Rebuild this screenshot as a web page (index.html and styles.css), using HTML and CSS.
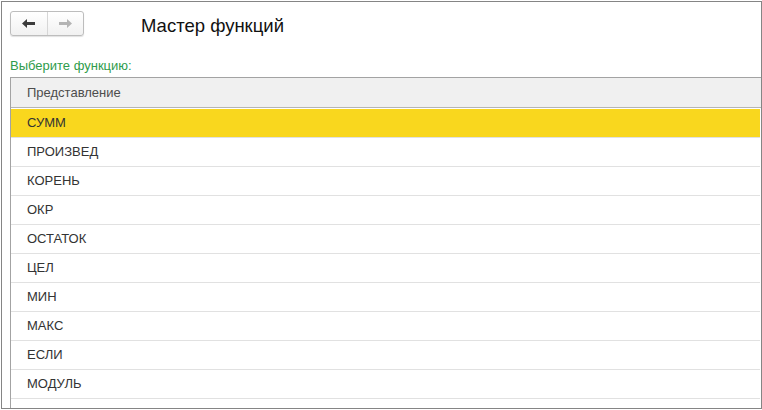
FILE: index.html
```html
<!DOCTYPE html>
<html lang="ru">
<head>
<meta charset="utf-8">
<title>Мастер функций</title>
<link rel="stylesheet" href="styles.css">
</head>
<body>
<div class="window">
  <div class="toolbar">
    <div class="nav-group">
      <button class="nav-btn" type="button" aria-label="Назад">
        <svg width="13" height="9" viewBox="0 0 13 9"><polygon points="0,4.5 5,0 5,3 13,3 13,6 5,6 5,9" fill="#3c3c3c"/></svg>
      </button>
      <button class="nav-btn nav-btn-right" type="button" aria-label="Вперёд">
        <svg width="13" height="9" viewBox="0 0 13 9"><polygon points="13,4.5 8,0 8,3 0,3 0,6 8,6 8,9" fill="#b4b4b4"/></svg>
      </button>
    </div>
    <div class="title">Мастер функций</div>
  </div>
  <div class="label">Выберите функцию:</div>
  <div class="table">
    <div class="thead">Представление</div>
    <div class="tbody">
      <div class="row selected">СУММ</div>
      <div class="row">ПРОИЗВЕД</div>
      <div class="row">КОРЕНЬ</div>
      <div class="row">ОКР</div>
      <div class="row">ОСТАТОК</div>
      <div class="row">ЦЕЛ</div>
      <div class="row">МИН</div>
      <div class="row">МАКС</div>
      <div class="row">ЕСЛИ</div>
      <div class="row">МОДУЛЬ</div>
      <div class="row">&nbsp;</div>
    </div>
  </div>
</div>
</body>
</html>
```
FILE: styles.css
```css
* { box-sizing: border-box; }
html, body {
  margin: 0;
  padding: 0;
  background: #ffffff;
}
body {
  font-family: Arial, "Liberation Sans", sans-serif;
  width: 762px;
  height: 410px;
  overflow: hidden;
}
.window {
  margin: 1px 0 0 1px;
  width: 761px;
  height: 408px;
  border: 1px solid #858585;
  overflow: hidden;
  display: flex;
  flex-direction: column;
}
.toolbar {
  display: flex;
  align-items: center;
  margin-top: 9px;
  padding-left: 8px;
  height: 25px;
}
.nav-group {
  display: flex;
  width: 74px;
  height: 25px;
  border: 1px solid #bdbdbd;
  border-radius: 3px;
  background: linear-gradient(#ffffff, #f1f1f1);
  box-shadow: 0 1px 1px rgba(0,0,0,0.12);
  overflow: hidden;
}
.nav-btn {
  flex: 1;
  margin: 0;
  padding: 0;
  border: 0;
  background: transparent;
  display: flex;
  align-items: center;
  justify-content: center;
}
.nav-btn-right {
  border-left: 1px solid #d6d6d6;
}
.title {
  margin-left: 57px;
  padding-top: 3px;
  font-size: 18.5px;
  color: #111111;
  line-height: 25px;
}
.label {
  margin-top: 22px;
  padding-left: 8px;
  font-size: 13px;
  line-height: 15px;
  height: 15px;
  color: #2f9c4c;
}
.table {
  margin-top: 4px;
  margin-left: 8px;
  flex: 1;
  border-top: 1px solid #a3a3a3;
  border-left: 1px solid #a3a3a3;
  font-size: 13px;
  color: #333333;
}
.thead {
  height: 30px;
  line-height: 29px;
  background: #f0f0f0;
  border-bottom: 1px solid #b5b5b5;
  padding-left: 16px;
  color: #4d4d4d;
}
.tbody {
  padding-top: 1px;
}
.row {
  height: 29px;
  line-height: 28px;
  border-bottom: 1px solid #e1e1e1;
  padding-left: 16px;
  margin-right: 1px;
}
.row.selected {
  background: #f9d71e;
}
```
